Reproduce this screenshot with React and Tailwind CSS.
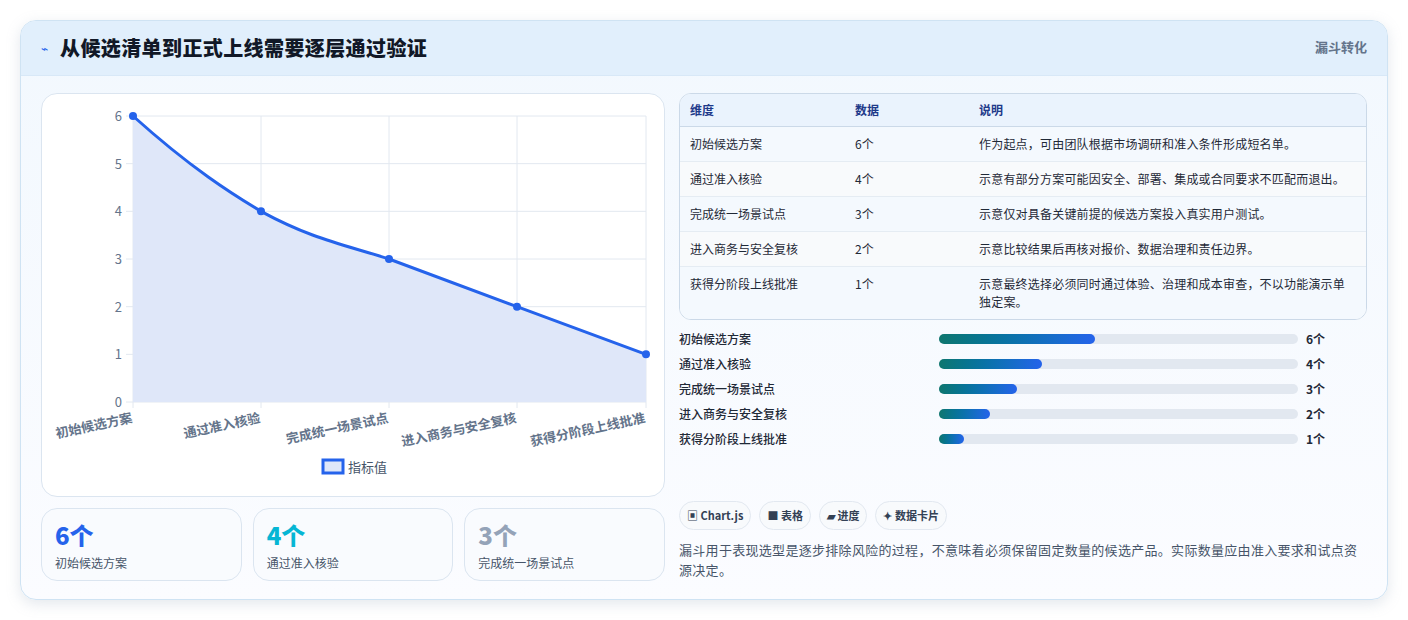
const F = { fontFamily: '"Noto Sans CJK SC", "Noto Sans", sans-serif' };
const rows = [
  ["初始候选方案", "6个", "作为起点，可由团队根据市场调研和准入条件形成短名单。"],
  ["通过准入核验", "4个", "示意有部分方案可能因安全、部署、集成或合同要求不匹配而退出。"],
  ["完成统一场景试点", "3个", "示意仅对具备关键前提的候选方案投入真实用户测试。"],
  ["进入商务与安全复核", "2个", "示意比较结果后再核对报价、数据治理和责任边界。"],
  ["获得分阶段上线批准", "1个", "示意最终选择必须同时通过体验、治理和成本审查，不以功能演示单独定案。"],
];
const bars = [["初始候选方案", 43.5, "6个"], ["通过准入核验", 28.7, "4个"], ["完成统一场景试点", 21.7, "3个"], ["进入商务与安全复核", 14.2, "2个"], ["获得分阶段上线批准", 7, "1个"]];

function Chart() {
  const xs = [91, 219, 347, 475, 604];
  const y = (v) => 22 + (6 - v) * 47.67;
  const vals = [6, 4, 3, 2, 1];
  const pts = vals.map((v, i) => [xs[i], y(v)]);
  const line = `M${pts[0][0]},${pts[0][1]} C150,75 190,100 ${pts[1][0]},${pts[1][1]} C270,145 300,150 ${pts[2][0]},${pts[2][1]} L${pts[3][0]},${pts[3][1]} L${pts[4][0]},${pts[4][1]}`;
  const labels = ["初始候选方案", "通过准入核验", "完成统一场景试点", "进入商务与安全复核", "获得分阶段上线批准"];
  return (
    <svg width="622" height="400" style={F}>
      {[0, 1, 2, 3, 4, 5, 6].map((v) => (
        <g key={v}>
          <line x1="84" x2="604" y1={y(v)} y2={y(v)} stroke="#e2e8f0" />
          <text x="80" y={y(v) + 5} textAnchor="end" fontSize="13" fill="#64748b">{v}</text>
        </g>
      ))}
      {xs.map((x) => <line key={x} x1={x} x2={x} y1="22" y2="314" stroke="#e2e8f0" />)}
      <path d={line + ` L604,308 L91,308 Z`} fill="#dfe7f9" />
      <path d={line} fill="none" stroke="#2563eb" strokeWidth="3" />
      {pts.map(([a, b], i) => <circle key={i} cx={a} cy={b} r="4" fill="#2563eb" />)}
      {labels.map((l, i) => (
        <text key={i} x={xs[i]} y="328" textAnchor="end" fontSize="13" fontWeight="600" fill="#64748b" transform={`rotate(-12 ${xs[i]} 328)`}>{l}</text>
      ))}
      <rect x="281" y="366" width="20" height="13" fill="#dfe7f9" stroke="#2563eb" strokeWidth="3" />
      <text x="306" y="378" fontSize="13" fill="#475569">指标值</text>
    </svg>
  );
}

export default function App() {
  return (
    <div className="w-[1408px] h-[620px] bg-white p-5" style={F}>
      <div className="rounded-2xl border border-[#cfe3f3] bg-gradient-to-b from-[#f2f8fe] to-[#fbfcff] shadow-[0_4px_14px_rgba(148,163,184,0.25)] overflow-hidden h-[580px]">
        <div className="h-[55px] bg-[#e1effc] flex items-center justify-between px-5 border-b border-[#d8e8f7]">
          <div className="flex items-center gap-3">
            <span className="text-[#2563eb] text-xs">⌁</span>
            <span className="text-[20px] font-extrabold text-[#111827] tracking-[0.4px]">从候选清单到正式上线需要逐层通过验证</span>
          </div>
          <span className="text-[13px] font-semibold text-[#64748b] self-start mt-4">漏斗转化</span>
        </div>
        <div className="flex gap-[14px] px-5 pt-[17px]">
          <div className="w-[624px] flex flex-col gap-[11px]">
            <div className="h-[404px] rounded-2xl border border-[#dbe5f0] bg-white"><Chart /></div>
            <div className="grid grid-cols-3 gap-[11px]">
              {[["6个", "text-[#2563eb]", "初始候选方案"], ["4个", "text-[#06b6d4]", "通过准入核验"], ["3个", "text-[#94a3b8]", "完成统一场景试点"]].map(([v, c, l]) => (
                <div key={l} className="h-[73px] rounded-2xl border border-[#dbe5f0] bg-[#f9fbfe] px-[13px] pt-[10px]">
                  <div className={`text-[24px] font-extrabold leading-[32px] ${c}`}>{v}</div>
                  <div className="text-[12px] text-[#475569] mt-[3px]">{l}</div>
                </div>
              ))}
            </div>
          </div>
          <div className="flex-1 flex flex-col">
            <div className="rounded-xl border border-[#cbd9e8] overflow-hidden bg-white">
              <div className="flex h-[33px] items-center bg-[#eaf3fd] border-b border-[#cbd9e8] text-[12px] font-semibold text-[#1e3a8a]">
                <div className="w-[175px] pl-[10px]">维度</div><div className="w-[124px]">数据</div><div>说明</div>
              </div>
              {rows.map((r, i) => (
                <div key={i} className={`flex py-[8px] text-[12px] text-[#1f2937] leading-[18px] ${i % 2 ? "bg-[#f8fafc]" : "bg-[#f4f9fe]"} ${i < 4 ? "border-b border-[#e5ecf3]" : ""}`}>
                  <div className="w-[175px] pl-[10px] shrink-0">{r[0]}</div><div className="w-[124px] shrink-0">{r[1]}</div><div className="pr-3 tracking-[0.2px]">{r[2]}</div>
                </div>
              ))}
            </div>
            <div className="mt-[10px] flex flex-col gap-[7px]">
              {bars.map(([l, w, v]) => (
                <div key={l} className="flex items-center h-[18px] text-[12px] font-medium text-[#1f2937]">
                  <div className="w-[260px]">{l}</div>
                  <div className="w-[359px] h-[10px] rounded-full bg-[#e2e8f0]">
                    <div className="h-full rounded-full bg-gradient-to-r from-[#0f766e] to-[#2563eb]" style={{ width: w + "%" }} />
                  </div>
                  <div className="ml-2 font-bold">{v}</div>
                </div>
              ))}
            </div>
            <div className="flex gap-2 mt-[53px]">
              {["▣ Chart.js", "■ 表格", "▰ 进度", "✦ 数据卡片"].map((t) => (
                <span key={t} className="h-[29px] px-[7px] flex items-center rounded-full border border-[#e2e8f0] bg-[#f8fafc] text-[11px] font-semibold text-[#334155]">{t}</span>
              ))}
            </div>
            <p className="mt-[10px] text-[13px] leading-[20px] text-[#475569] tracking-[0.3px]">漏斗用于表现选型是逐步排除风险的过程，不意味着必须保留固定数量的候选产品。实际数量应由准入要求和试点资源决定。</p>
          </div>
        </div>
      </div>
    </div>
  );
}
